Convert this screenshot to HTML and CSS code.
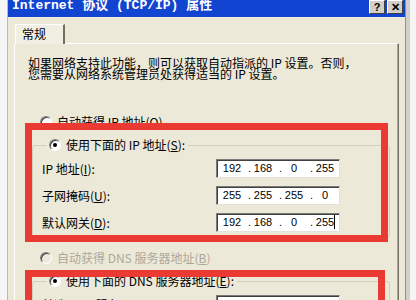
FILE: index.html
```html
<!DOCTYPE html>
<html lang="zh-CN">

<head>
  <meta charset="UTF-8" />
  <meta name="viewport" content="width=device-width, initial-scale=1.0" />
  <title>Internet 协议 (TCP/IP) 属性</title>
  <link rel="stylesheet" href="styles.css">
</head>

<body>
  <div class="stage">
    <div class="window">
      <div class="titlebar">
        <span class="title">Internet 协议 (TCP/IP) 属性</span>
        <div class="caption-btns">
          <span class="cbtn">?</span>
          <span class="cbtn">✕</span>
        </div>
      </div>

      <div class="client">
        <div class="tabs">
          <div class="tab">常规</div>
        </div>

        <div class="panel">
          <p class="intro">如果网络支持此功能，则可以获取自动指派的 IP 设置。否则，<br>您需要从网络系统管理员处获得适当的 IP 设置。</p>

          <div class="radio-row first">
            <span class="radio"></span>
            <span>自动获得 IP 地址(<u>O</u>)</span>
          </div>

          <fieldset class="group">
            <legend>
              <span class="radio checked"></span>
              <span>使用下面的 IP 地址(<u>S</u>):</span>
            </legend>
            <div class="field-row">
              <span>IP 地址(<u>I</u>):</span>
              <div class="ip">
                <span>192</span><span class="dot">.</span><span>168</span><span class="dot">.</span><span>0</span><span class="dot">.</span><span>255</span>
              </div>
            </div>
            <div class="field-row">
              <span>子网掩码(<u>U</u>):</span>
              <div class="ip">
                <span>255</span><span class="dot">.</span><span>255</span><span class="dot">.</span><span>255</span><span class="dot">.</span><span>0</span>
              </div>
            </div>
            <div class="field-row">
              <span>默认网关(<u>D</u>):</span>
              <div class="ip">
                <span>192</span><span class="dot">.</span><span>168</span><span class="dot">.</span><span>0</span><span class="dot">.</span><span>255<i class="caret"></i></span>
              </div>
            </div>
          </fieldset>

          <div class="radio-row disabled">
            <span class="radio"></span>
            <span>自动获得 DNS 服务器地址(<u>B</u>)</span>
          </div>

          <fieldset class="group">
            <legend>
              <span class="radio checked"></span>
              <span>使用下面的 DNS 服务器地址(<u>E</u>):</span>
            </legend>
            <div class="field-row">
              <span>首选 DNS 服务器(<u>P</u>):</span>
              <div class="ip">
                <span>192</span><span class="dot">.</span><span>168</span><span class="dot">.</span><span>0</span><span class="dot">.</span><span>1</span>
              </div>
            </div>
          </fieldset>
        </div>
      </div>
    </div>

    <!-- red annotation frames drawn over the dialog -->
    <div class="mark mark-ip"></div>
    <div class="mark mark-dns"></div>
  </div>
</body>

</html>
```

FILE: styles.css
```css
body {
  margin: 0;
  font-family: "Noto Sans CJK SC", sans-serif;
  font-size: 12px;
  color: #000;
}

.stage {
  position: relative;
  width: 416px;
  height: 300px;
  overflow: hidden;
  background: #f5f5f5;
}

.window {
  margin-left: 7px;
  width: 397px;
  height: 300px;
  background: #ece9d8;
  border-left: 1px solid #b9b9b9;
  border-right: 1px solid #8f8f8f;
  box-shadow: 4px 0 0 #d2d0ca;
}

.titlebar {
  display: flex;
  align-items: flex-start;
  height: 17px;
  padding: 0 2px 0 4px;
  background: #1144d0;
}

.title {
  font-family: "Liberation Mono", "Noto Sans CJK SC", monospace;
  font-weight: bold;
  font-size: 13px;
  line-height: 11px;
  color: #fff;
  white-space: pre;
}

.caption-btns {
  display: flex;
  gap: 2px;
  margin-left: auto;
}

.cbtn {
  box-sizing: border-box;
  width: 16px;
  height: 14px;
  background: #d4d0c8;
  border: 1px solid;
  border-color: #fff #404040 #404040 #fff;
  font-family: "Liberation Sans", sans-serif;
  font-weight: bold;
  font-size: 11px;
  line-height: 12px;
  text-align: center;
}

.client {
  padding: 7px 6px 0 6px;
}

.tabs {
  display: flex;
  height: 19px;
  margin-left: 1px;
}

.tab {
  position: relative;
  z-index: 1;
  box-sizing: border-box;
  width: 50px;
  height: 20px;
  padding: 3px 0 0 6px;
  line-height: 12px;
  background: #f1efe4;
  border: 1px solid #fff;
  border-bottom: none;
  border-right: 2px solid #716f64;
}

.panel {
  height: 300px;
  padding: 13px 0 0 0;
  border: 1px solid;
  border-color: #fff #716f64 #716f64 #fff;
  box-shadow: inset -1px 0 0 #aca899;
}

.intro {
  margin: 0;
  padding-left: 13px;
  line-height: 11px;
  white-space: nowrap;
}

.radio-row,
legend {
  display: flex;
  align-items: center;
  gap: 5px;
  line-height: 12px;
}

.radio-row {
  height: 12px;
  padding-left: 25px;
  margin-top: 11px;
}

.radio-row.first {
  margin-top: 37px;
}

.radio-row.disabled {
  margin-top: 14px;
  color: #aca899;
}

.radio {
  position: relative;
  box-sizing: border-box;
  width: 12px;
  height: 12px;
  border-radius: 50%;
  background: #fff;
  border: 1px solid;
  border-color: #808080 #fff #fff #808080;
  box-shadow: inset 1px 1px 0 #404040;
}

.disabled .radio {
  background: #ece9d8;
}

.radio.checked::after {
  content: "";
  position: absolute;
  left: 3px;
  top: 3px;
  width: 4px;
  height: 4px;
  border-radius: 50%;
  background: #000;
}

.group {
  margin: 11px 0 0 17px;
  width: 347px;
  padding: 8px 0 5px 9px;
  border: 1px solid #d0d0bf;
  border-radius: 3px;
}

legend {
  margin-left: 5px;
  padding: 0 3px 0 2px;
}

.field-row {
  display: grid;
  grid-template-columns: 174px 124px;
  align-items: center;
  height: 19px;
  margin-bottom: 8px;
}

.field-row:last-child {
  margin-bottom: 0;
}

.ip {
  box-sizing: border-box;
  display: grid;
  grid-template-columns: 24px 7px 24px 7px 24px 7px 24px;
  height: 19px;
  padding-left: 3px;
  background: #fff;
  border: 1px solid;
  border-color: #7a7a7a #e4e2d8 #e4e2d8 #7a7a7a;
  box-shadow: inset 1px 1px 0 #404040;
  font-family: "Liberation Sans", sans-serif;
  font-size: 11px;
  line-height: 17px;
  text-align: center;
}

.ip .dot {
  text-align: right;
}

.caret {
  display: inline-block;
  width: 1px;
  height: 14px;
  margin-right: -1px;
  vertical-align: -3px;
  background: #000;
}

.mark {
  position: absolute;
  box-sizing: border-box;
  border: 7px solid #eb3a33;
}

.mark-ip {
  left: 25px;
  top: 123px;
  width: 363px;
  height: 119px;
}

.mark-dns {
  left: 25px;
  top: 270px;
  width: 360px;
  height: 60px;
}
```
